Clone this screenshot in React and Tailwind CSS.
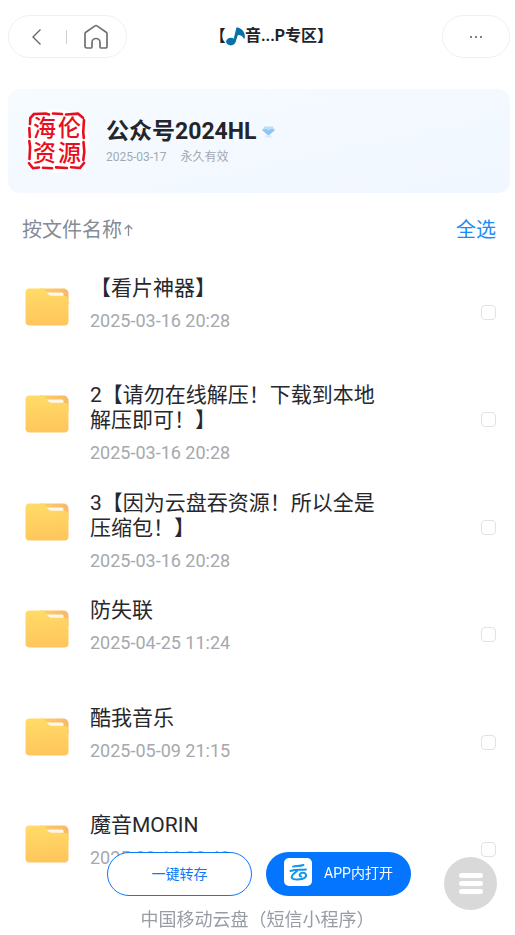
import React from "react";

const files = [
  { name: "【看片神器】", date: "2025-03-16 20:28" },
  { name: "2【请勿在线解压！下载到本地解压即可！】", date: "2025-03-16 20:28" },
  { name: "3【因为云盘吞资源！所以全是压缩包！】", date: "2025-03-16 20:28" },
  { name: "防失联", date: "2025-04-25 11:24" },
  { name: "酷我音乐", date: "2025-05-09 21:15" },
  { name: "魔音MORIN", date: "2025-03-16 20:48" },
];

function FolderIcon() {
  return (
    <svg width="44" height="38" viewBox="0 0 44 38" className="shrink-0" aria-hidden="true">
      <defs>
        <linearGradient id="folder-front" x1="0" y1="0" x2="0.1" y2="1">
          <stop offset="0" stopColor="#ffdc68" />
          <stop offset="1" stopColor="#ffc65c" />
        </linearGradient>
        <linearGradient id="folder-back" x1="0" y1="0" x2="1" y2="0">
          <stop offset="0" stopColor="#ffcf66" />
          <stop offset="1" stopColor="#f9b768" />
        </linearGradient>
      </defs>
      <path d="M15 .5h23.500a5 5 0 0 1 5 5V16H15Z" fill="url(#folder-back)" />
      <path d="M20 4.500h17a1.500 1.500 0 0 1 1.500 1.500v3H23Z" fill="#fff7ea" />
      <path
        d="M4.500.5h11.800c1.500 0 2.800.6 3.700 1.700l3.300 4.100c.9 1 1.900 1.400 3.200 1.400H39c2.800 0 4.500 1.700 4.500 4.300v21.500c0 2.600-1.500 4-4 4h-35c-2.500 0-4-1.400-4-4v-29c0-2.600 1.500-4 4-4Z"
        fill="url(#folder-front)"
      />
    </svg>
  );
}

function Seal() {
  return (
    <div className="relative grid size-16 shrink-0 place-items-center rounded-full bg-white text-[#e60f1f]">
      <svg className="absolute inset-0" width="64" height="64" viewBox="0 0 64 64" fill="none" stroke="currentColor" strokeLinecap="round" aria-hidden="true">
        <path
          d="M9 5l12-.5 3 1M28 4.500l9 .5M41 5.500l12-.8 5 4M59 11l-.8 12 .6 6M58.500 33l.8 10-1 8M59 54l-4 5-9-.8M42 59l-11-.6M27 59.200l-9-.4M14 58.500l-6 .7-4-5M4.500 50l.6-12-.8-6M4.800 28l-.5-9M5 15l.3-6L9 5"
          strokeWidth="2.600"
        />
      </svg>
      <div className="grid grid-cols-2 gap-x-[2px] text-[23px] leading-[25px] font-medium">
        <span>海</span>
        <span>伦</span>
        <span>资</span>
        <span>源</span>
      </div>
    </div>
  );
}

function Header() {
  return (
    <header className="flex items-start pt-[15px] pr-[5px] pl-2">
      <nav className="flex h-[43px] w-[119px] items-center rounded-full border border-[#f0f0f0] pl-[22px]">
        <button type="button" aria-label="返回">
          <svg width="12" height="18" viewBox="0 0 12 18" fill="none" stroke="#5f6368" strokeWidth="1.300" aria-hidden="true">
            <path d="M9.500 1.500L2 9l7.500 7.500" />
          </svg>
        </button>
        <span className="ml-[23px] h-[14px] w-px bg-[#cfcfcf]" />
        <button type="button" aria-label="首页" className="ml-4">
          <svg width="26" height="26" viewBox="0 0 26 26" fill="none" stroke="#6d7074" strokeWidth="1.700" strokeLinejoin="round" aria-hidden="true">
            <path d="M2.800 8.200L12 1.900a1.700 1.700 0 0 1 2 0l9.200 6.300a1.800 1.800 0 0 1 .8 1.500v12.500a1.800 1.800 0 0 1-1.800 1.800h-4a1.200 1.200 0 0 1-1.200-1.200v-4.300a4 4 0 0 0-8 0v4.300A1.200 1.200 0 0 1 7.800 24h-4A1.800 1.800 0 0 1 2 22.200V9.700a1.800 1.800 0 0 1 .8-1.500Z" />
          </svg>
        </button>
      </nav>
      <h1 className="flex h-[42px] flex-1 items-center justify-center pr-[26px] text-[16px] font-bold text-[#222327]">
        <span>【</span>
        <svg width="19" height="19" viewBox="0 0 19 19" fill="#0872a8" aria-hidden="true">
          <ellipse cx="4.800" cy="14.600" rx="4.700" ry="3.800" />
          <path d="M7 14.800L10.400.6c.5-.3 1-.2 1.500 0 4 1 6.600 4.400 7 8.200.1 1.400-.3 2.600-.9 3.200-.7-2.600-3.200-4-6.100-4.100l-2.400 7.400Z" />
        </svg>
        <span>音...P专区】</span>
      </h1>
      <button type="button" aria-label="更多" className="flex h-[43px] w-[68px] items-center justify-center gap-[3px] rounded-full border border-[#f0f0f0]">
        <span className="size-[2px] rounded-full bg-[#55585d]" />
        <span className="size-[2px] rounded-full bg-[#55585d]" />
        <span className="size-[2px] rounded-full bg-[#55585d]" />
      </button>
    </header>
  );
}

function OwnerCard() {
  return (
    <section className="mt-[31px] mr-[5px] ml-2 flex h-[104px] items-center rounded-xl bg-linear-to-br from-[#f6fbff] to-[#f1f7ff] pl-[17px]">
      <Seal />
      <div className="ml-[17px] pt-[2px]">
        <h2 className="flex items-center gap-[6px] text-[23px] leading-[30px] font-bold text-[#23252b]">
          公众号2024HL
          <svg width="13" height="12" viewBox="0 0 13 12" aria-hidden="true">
            <path d="M2.500.5h8L13 4 6.500 9.500 0 4Z" fill="#b9defa" />
            <path d="M0 4l4-1 2.500 1.500L9 3l4 1-6.500 5.500Z" fill="#8cc6f4" />
            <path d="M4.500 9h4l1.500 2.500H3Z" fill="#d5eafb" />
          </svg>
        </h2>
        <p className="flex gap-[14px] text-[12px] leading-5 text-[#a4a9b0]">
          <time>2025-03-17</time>
          <span>永久有效</span>
        </p>
      </div>
    </section>
  );
}

function FileRow({ file, index }) {
  const id = `file-${index}`;
  return (
    <li className="flex h-[107px] items-start pr-[19px] pl-[25px] even:h-[108px]">
      <div className="pt-3">
        <FolderIcon />
      </div>
      <label htmlFor={id} className="mr-24 ml-[21px] min-w-0 flex-1">
        <span className="block text-[21px] leading-[25px] text-[#27282d]">{file.name}</span>
        <time className="mt-[7px] block text-[18px] leading-[25px] text-[#a6a8ae]">{file.date}</time>
      </label>
      <input
        id={id}
        type="checkbox"
        className="mt-[29px] size-[15px] shrink-0 appearance-none rounded-[4px] border border-[#e2e2e4] bg-white checked:bg-[#0a7aff]"
      />
    </li>
  );
}

function BottomBar() {
  return (
    <footer className="fixed inset-x-0 bottom-0 flex flex-col items-center gap-3 pb-[3px] pl-[3px]">
      <div className="flex gap-[14px]">
        <button type="button" className="h-11 w-[145px] rounded-full border border-[#0a78fb] bg-white text-[14px] text-[#0a78fb]">
          一键转存
        </button>
        <button type="button" className="flex h-11 w-[145px] items-center justify-center gap-3 rounded-full bg-[#0475ff] pb-1 text-[14px] leading-7 text-white">
          <svg width="28" height="28" viewBox="0 0 28 28" aria-hidden="true">
            <rect width="28" height="28" rx="5" fill="#fff" />
            <g fill="none" stroke="#1295ea" strokeLinecap="round" strokeLinejoin="round">
              <path d="M9 8.600c3.500-.9 6.500-.3 10.500-1.600" strokeWidth="2" />
              <path d="M6.500 13c5.500-1.900 10-.7 15.500-1.600" strokeWidth="2" />
              <path d="M13 13c-2.500 2.200-5.800 4.300-5.300 6.400.7 2.700 10 2.600 13 .5 2.800-2.200 1-5.400-2.200-5.100-3 .3-4 3.400-1.200 3.700" strokeWidth="2" />
            </g>
          </svg>
          <span className="pt-[2px]">APP内打开</span>
        </button>
      </div>
      <p className="pr-[3px] text-[18px] leading-6 text-[#989ca4]">中国移动云盘（短信小程序）</p>
    </footer>
  );
}

export default function App() {
  return (
    <div className="min-h-screen bg-white font-[Roboto,'Noto_Sans_CJK_SC',sans-serif]">
      <Header />
      <main>
        <OwnerCard />
        <div className="mt-[22px] flex items-center justify-between pr-[19px] pl-[22px] text-[20px] leading-[30px]">
          <button type="button" className="flex items-center gap-[2px] text-[#858b95]">
            按文件名称
            <svg width="9" height="12" viewBox="0 0 9 12" fill="none" stroke="currentColor" strokeWidth="1.300" aria-hidden="true">
              <path d="M4.500 12V1.500M.8 5l3.700-3.700L8.200 5" />
            </svg>
          </button>
          <button type="button" className="text-[#1a8cf5]">全选</button>
        </div>
        <ul className="mt-[31px]">
          {files.map((file, index) => (
            <FileRow key={file.name} file={file} index={index} />
          ))}
        </ul>
      </main>
      <BottomBar />
      <button
        type="button"
        aria-label="菜单"
        className="fixed right-[18px] bottom-[25px] flex size-[53px] flex-col items-center justify-center gap-[3px] rounded-full bg-[#d9d9d9]"
      >
        <span className="h-[5px] w-6 rounded-full bg-white" />
        <span className="h-[5px] w-6 rounded-full bg-white" />
        <span className="h-[5px] w-6 rounded-full bg-white" />
      </button>
    </div>
  );
}
